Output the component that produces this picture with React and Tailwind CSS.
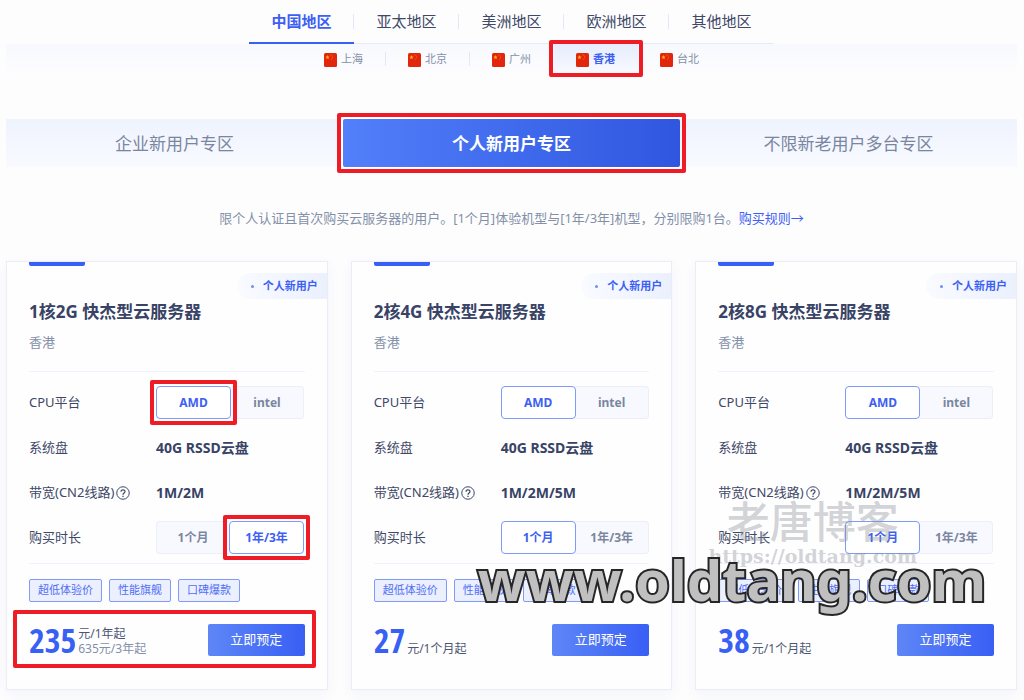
import { useState } from "react";

const AREAS = ["中国地区", "亚太地区", "美洲地区", "欧洲地区", "其他地区"];
const CITIES = ["上海", "北京", "广州", "香港", "台北"];
const ZONES = ["企业新用户专区", "个人新用户专区", "不限新老用户多台专区"];
const TAGS = ["超低体验价", "性能旗舰", "口碑爆款"];

const PLANS = [
  { name: "1核2G 快杰型云服务器", bandwidth: "1M/2M", term: 1, price: "235", unit: "元/1年起", extra: "635元/3年起", marked: true },
  { name: "2核4G 快杰型云服务器", bandwidth: "1M/2M/5M", term: 0, price: "27", unit: "元/1个月起" },
  { name: "2核8G 快杰型云服务器", bandwidth: "1M/2M/5M", term: 0, price: "38", unit: "元/1个月起" },
];

function Flag() {
  return (
    <svg viewBox="0 0 26 28" className="h-3.5 w-[13px] shrink-0" aria-hidden="true">
      <rect width="26" height="28" rx="3" fill="#e1260d" />
      <path d="M7 4l1.2 3 3.2.2-2.5 2 .9 3.1L7 10.600 4.200 12.300l.9-3.100-2.500-2 3.200-.2z" fill="#ffb400" />
      <path d="M13 3.500q4.500 1 4 5.500-.5 3-3.500 4" fill="none" stroke="#f08a00" strokeWidth="1.500" strokeDasharray="2 1.500" />
    </svg>
  );
}

function Help() {
  return (
    <svg viewBox="0 0 28 28" className="h-3.5 w-3.5 shrink-0" fill="none" stroke="#3f4866" strokeWidth="2" aria-hidden="true">
      <circle cx="14" cy="14" r="12.500" />
      <path d="M10 11.500c0-5 8-5 8-.5 0 3-4 3-4 6.500" strokeWidth="2.400" />
      <path d="M14 19.500v2.500" strokeWidth="2.600" />
    </svg>
  );
}

function Mark({ className }) {
  return <span aria-hidden="true" className={`pointer-events-none absolute z-10 rounded-[2px] border-4 border-[#ee1c25] ${className}`} />;
}

function Segmented({ label, options, initial, marked }) {
  const [active, setActive] = useState(initial);
  return (
    <div role="group" aria-label={label} className="flex h-[33px] w-[148px] rounded-[4px] bg-[#f8f9fe]">
      {options.map((o, i) => (
        <span key={o} className={`relative flex ${i === active ? "w-[75px]" : "w-[73px]"}`}>
          <button
            type="button"
            aria-pressed={i === active}
            onClick={() => setActive(i)}
            className={`flex-1 border text-xs font-bold ${
              i === active
                ? "rounded-[4px] border-[#7e9bf8] bg-white text-[#3d5ff3]"
                : `border-[#eceff8] text-[#7a869f] ${i === 0 ? "rounded-l-[4px] border-r-0" : "rounded-r-[4px] border-l-0"}`
            }`}
          >
            {o}
          </button>
          {marked && i === initial && <Mark className="-inset-1.5" />}
        </span>
      ))}
    </div>
  );
}

function Row({ label, help, children }) {
  return (
    <div className="flex h-[45px] items-center">
      <span className="flex w-[127px] shrink-0 items-center gap-0.5 whitespace-nowrap text-[13px] text-[#3f4866]">
        {label}
        {help && <Help />}
      </span>
      {children}
    </div>
  );
}

function Plan({ plan }) {
  return (
    <article className="relative border border-[#eaedf6] bg-[#fefeff] px-[22px] pb-[33px] shadow-[0_4px_12px_rgba(60,80,160,0.05)]">
      <div className="h-1 w-14 rounded-b-[2px] bg-[#3860f4]" />
      <div className="-mr-[22px] mt-[7px] flex justify-end">
        <span className="flex h-[26px] w-[90px] items-center justify-end rounded-l-full bg-linear-to-r from-[#f9fbff] to-[#ebf0fd] pr-[9px] text-[11px] font-bold text-[#3d5ff3]">
          <i className="mr-[9px] h-[3px] w-[3px] rounded-full bg-[#6f8df8]" />
          个人新用户
        </span>
      </div>
      <h2 className="mt-px text-[17px] font-bold leading-6 text-[#384365]">{plan.name}</h2>
      <p className="mt-2 text-[13px] leading-5 text-[#8490a8]">香港</p>
      <div className="mt-[19px] border-y border-[#f0f3fb] pt-2 pb-[3px]">
        <Row label="CPU平台">
          <Segmented label="CPU平台" options={["AMD", "intel"]} initial={0} marked={plan.marked} />
        </Row>
        <Row label="系统盘">
          <strong className="text-sm text-[#384365]">40G RSSD云盘</strong>
        </Row>
        <Row label="带宽(CN2线路)" help>
          <strong className="text-sm text-[#384365]">{plan.bandwidth}</strong>
        </Row>
        <Row label="购买时长">
          <Segmented label="购买时长" options={["1个月", "1年/3年"]} initial={plan.term} marked={plan.marked} />
        </Row>
      </div>
      <ul className="mt-[15px] flex gap-[7px]">
        {TAGS.map((t) => (
          <li key={t} className="flex h-[23px] items-center whitespace-nowrap rounded-[2px] border border-[#7e9bf8] bg-[#ecf0fe] px-2 text-[11px] text-[#4f6ff5]">
            {t}
          </li>
        ))}
      </ul>
      <div className="relative mt-[22px] flex h-8 items-center justify-between">
        <div className="flex items-end">
          <span className="font-['Noto_Sans_ExtraCondensed','Open_Sans_Condensed','Roboto_Condensed','Liberation_Sans',sans-serif] text-[34px] font-medium leading-8 text-[#3860f4]">{plan.price}</span>
          <span className="ml-0.5 whitespace-nowrap text-xs leading-[15px] text-[#4c5672]">
            {plan.unit}
            {plan.extra && <span className="block text-[#8490a8]">{plan.extra}</span>}
          </span>
        </div>
        <button type="button" className="h-8 w-[97px] rounded-[2px] bg-linear-to-r from-[#5f86f7] to-[#385ef4] text-[13px] text-white">
          立即预定
        </button>
        {plan.marked && <Mark className="-top-3.5 -right-[11px] -bottom-3 -left-4" />}
      </div>
    </article>
  );
}

export default function App() {
  const [area, setArea] = useState(0);
  const [city, setCity] = useState(3);
  const [zone, setZone] = useState(1);
  return (
    <main className="min-h-screen overflow-hidden bg-[#fdfdfe] pr-[7px] pb-2 pl-1.5 font-['Noto_Sans','Noto_Sans_CJK_SC',sans-serif]">
      <nav aria-label="地区" className="flex justify-center">
        {AREAS.map((a, i) => (
          <button
            key={a}
            type="button"
            onClick={() => setArea(i)}
            className={`relative h-11 w-[105px] text-[15px] ${i === area ? "border-b-2 border-[#3860f4] font-bold text-[#3d5ff3]" : "border-b border-[#e6eaf5] text-[#3f4866]"}`}
          >
            {a}
            {i < AREAS.length - 1 && <span className="absolute top-3.5 right-0 h-[15px] w-px bg-[#e3e8f6]" />}
          </button>
        ))}
      </nav>
      <nav aria-label="城市" className="flex h-8 justify-center bg-linear-to-b from-[#f8f9fe] to-[#fdfdfe]">
        {CITIES.map((c, i) => (
          <button
            key={c}
            type="button"
            onClick={() => setCity(i)}
            className={`relative flex h-[31px] w-[84px] items-center justify-center gap-1 text-[11px] ${i === city ? "bg-linear-to-b from-[#e6ecfd] to-[#fafbff] font-bold text-[#3d5ff3]" : "text-[#8490a8]"}`}
          >
            <Flag />
            {c}
            {i < 2 && <span className="absolute top-2 right-0 h-3.5 w-px bg-[#e3e8f6]" />}
            {i === 3 && <Mark className="-inset-x-[5px] -top-1 -bottom-0.5" />}
          </button>
        ))}
      </nav>
      <nav aria-label="专区" className="mt-[43px] grid h-12 grid-cols-3">
        {ZONES.map((z, i) => (
          <button
            key={z}
            type="button"
            onClick={() => setZone(i)}
            className={`relative pt-0.5 text-[17px] ${i === zone ? "rounded-[2px] bg-linear-to-r from-[#527ffa] to-[#3056e0] font-bold text-white ring-2 ring-white" : "bg-linear-to-b from-[#eff3fe] to-[#f8faff] text-[#7a869f]"}`}
          >
            {z}
            {i === 1 && <Mark className="-inset-1.5" />}
          </button>
        ))}
      </nav>
      <p className="mt-[41px] text-center text-[13px] leading-5 text-[#8490a8]">
        限个人认证且首次购买云服务器的用户。[1个月]体验机型与[1年/3年]机型，分别限购1台。
        <a href="#rules" className="text-[#3d5ff3]">购买规则→</a>
      </p>
      <section className="relative mt-[33px] grid grid-cols-3 gap-[23px]">
        {PLANS.map((p) => (
          <Plan key={p.name} plan={p} />
        ))}
        <div aria-hidden="true" className="pointer-events-none absolute right-[100px] bottom-[122px] z-20 flex flex-col items-center whitespace-nowrap text-[#8c9096]/40">
          <span className="text-[43px] font-medium leading-[44px]">老唐博客</span>
          <span className="font-['DejaVu_Serif',serif] text-[19px] font-bold leading-6">https://oldtang.com</span>
        </div>
        <div aria-hidden="true" className="pointer-events-none absolute right-[31px] bottom-[71px] z-20 whitespace-nowrap text-[56px] font-bold leading-[80px] text-[#c0c0c0] [paint-order:stroke_fill] [-webkit-text-stroke:4px_#262626]">
          www.oldtang.com
        </div>
      </section>
    </main>
  );
}
